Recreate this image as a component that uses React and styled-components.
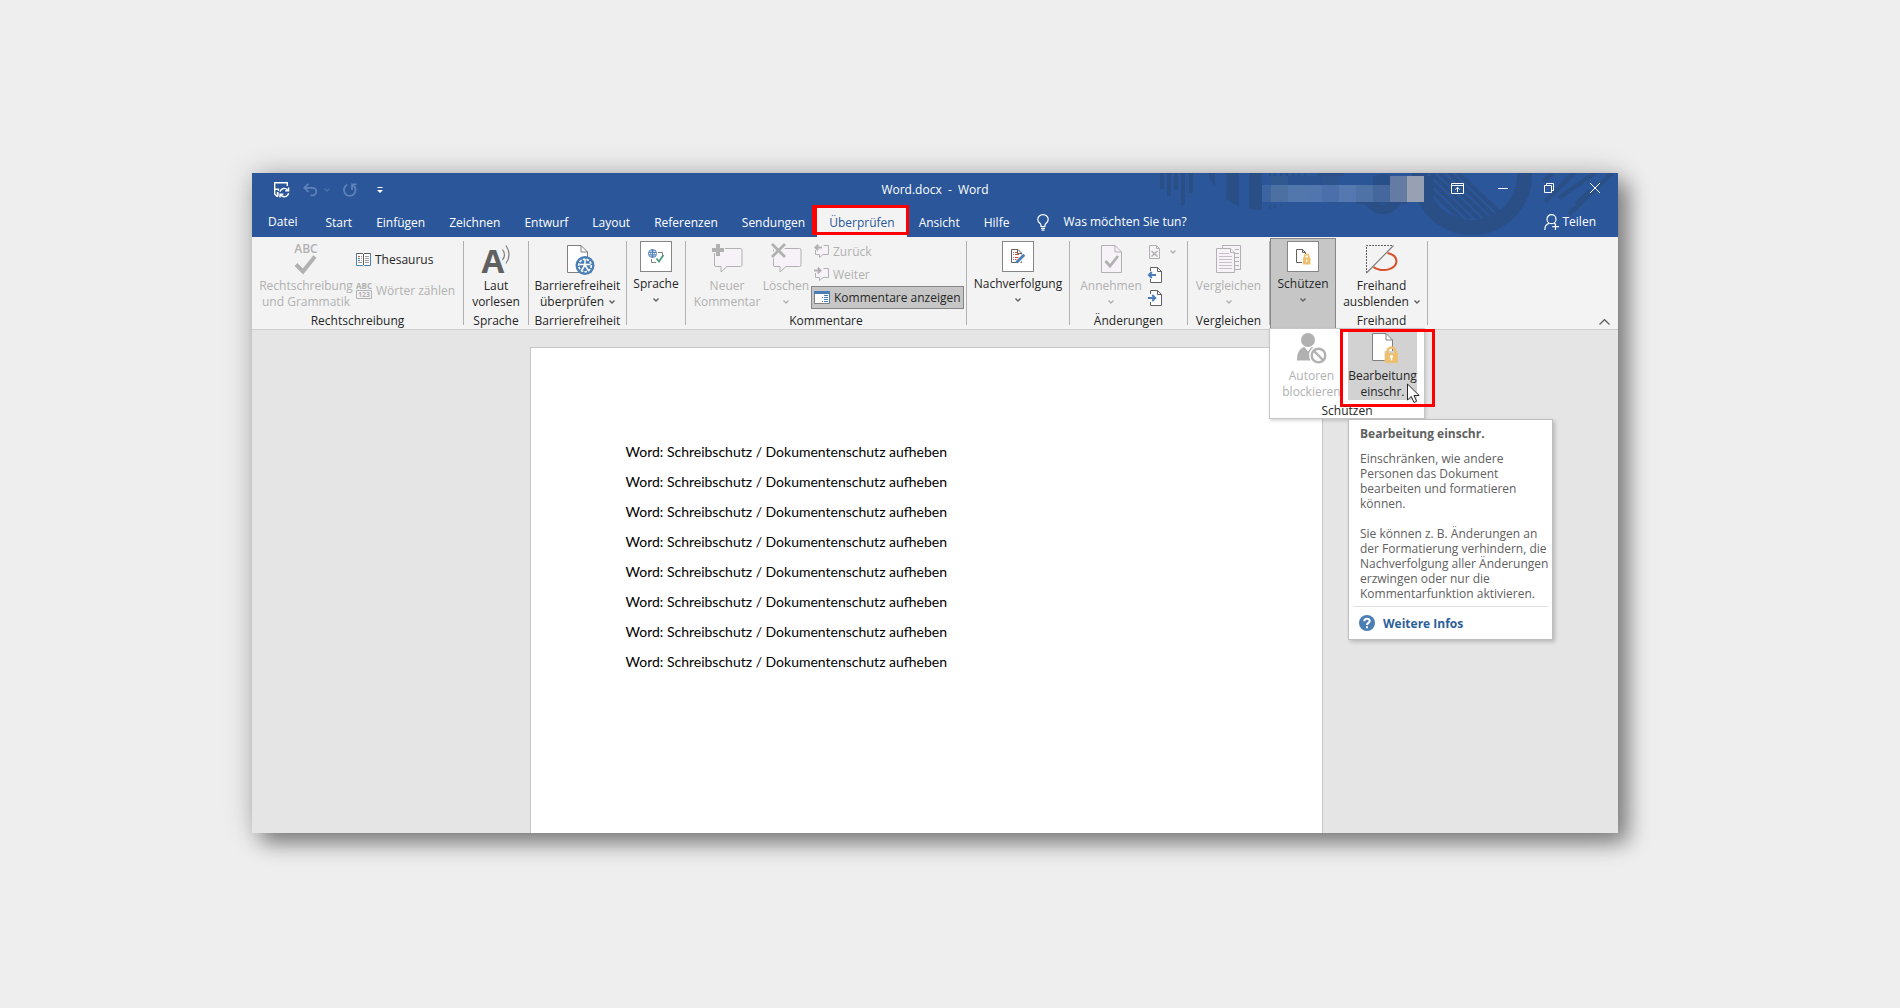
import styled, { createGlobalStyle, css } from "styled-components";

const GlobalStyle = createGlobalStyle`
  * {
    box-sizing: border-box;
  }

  body {
    margin: 0;
    background: #eeeeee;
    color: #262626;
    font-family: "Open Sans", "Noto Sans", sans-serif;
    font-size: 12px;
    line-height: 16px;
  }

  button,
  input {
    margin: 0;
    padding: 0;
    border: 0;
    background: none;
    color: inherit;
    font: inherit;
  }

  svg {
    display: block;
    flex: none;
    overflow: visible;
  }
`;

const Stage = styled.div`
  display: flex;
  min-height: 100vh;
  padding: 173px 282px 175px 252px;
`;

const Window = styled.div`
  display: flex;
  flex-direction: column;
  flex: 1;
  min-width: 0;
  background: #e5e5e5;
  box-shadow:
    10px 10px 20px rgba(0, 0, 0, 0.42),
    0 0 28px rgba(0, 0, 0, 0.2);
`;

/* ---------- blue header ---------- */

const Header = styled.header`
  position: relative;
  background: #2b579a;
  color: #fff;
`;

const HeaderArt = styled.svg`
  position: absolute;
  top: 0;
  right: 0;
  overflow: hidden;
`;

const TitleBar = styled.div`
  position: relative;
  display: grid;
  grid-template-columns: 1fr auto 1fr;
  height: 34px;
`;

const QuickAccess = styled.div`
  display: flex;
  align-items: center;
  padding-left: 22px;
`;

const QuickButton = styled.button`
  display: flex;
  align-items: center;
  gap: 6px;
  height: 16px;
  margin-right: ${(props) => (props.$wide ? "20px" : "13px")};
`;

const Title = styled.div`
  align-self: center;
  white-space: pre;
`;

const WindowButtons = styled.div`
  display: flex;
  justify-content: flex-end;
`;

const WindowButton = styled.button`
  display: flex;
  justify-content: center;
  align-items: center;
  width: 46px;
  height: 30px;
`;

const TabBar = styled.nav`
  position: relative;
  display: flex;
  height: 30px;
`;

const Tab = styled.button`
  position: relative;
  height: 30px;
  padding: 2px 12px 0;
  white-space: nowrap;

  ${(props) =>
    props.$file &&
    css`
      padding: 0 16px;
    `}

  ${(props) =>
    props.$active &&
    css`
      background: #f3f3f3;
      color: #2b579a;
    `}
`;

const TabFrame = styled.span`
  position: absolute;
  inset: -2px -2px 2px -5px;
  border: 3px solid #fe0000;
  border-left-width: 5px;
`;

const TellMe = styled.label`
  display: flex;
  align-items: center;
  gap: 14px;
  margin-left: 16px;
`;

const TellMeInput = styled.input`
  width: 160px;
  outline: none;

  &::placeholder {
    color: #fff;
    opacity: 1;
  }
`;

const ShareButton = styled.button`
  display: flex;
  align-items: center;
  gap: 2px;
  margin-left: auto;
  margin-right: 22px;
`;

/* ---------- ribbon ---------- */

const Ribbon = styled.div`
  display: flex;
  height: 93px;
  background: #f3f3f3;
  border-bottom: 1px solid #cdcdcd;
`;

const Group = styled.section`
  display: flex;
  flex-direction: column;
  flex: none;
  width: ${(props) => props.$width}px;
  margin: 4px 0;
  border-right: 1px solid #b1b1b1;
`;

const GroupBody = styled.div`
  display: flex;
  justify-content: ${(props) => (props.$start ? "flex-start" : "center")};
  flex: 1;
  padding-left: ${(props) => (props.$start ? "7px" : "0")};
`;

const GroupCaption = styled.div`
  height: 12px;
  line-height: 16px;
  text-align: center;
  white-space: nowrap;
`;

const BigButton = styled.button`
  display: flex;
  flex-direction: column;
  align-items: center;
  width: ${(props) => props.$width || 90}px;
  padding-top: 4px;
  white-space: nowrap;

  &:disabled {
    color: #b1b1b1;
  }
`;

const BigIcon = styled.span`
  display: flex;
  justify-content: center;
  height: 33px;
`;

const LabelLine = styled.span`
  display: flex;
  align-items: center;
  gap: 5px;
  height: 16px;
`;

const SmallColumn = styled.div`
  display: flex;
  flex-direction: column;
  align-items: flex-start;
  gap: ${(props) => (props.$spread ? "8px" : "0")};
  margin-top: ${(props) => (props.$spread ? "7px" : "-1px")};
`;

const SmallButton = styled.button`
  display: flex;
  align-items: center;
  gap: 4px;
  height: 23px;
  padding: 0 2px;
  border: 1px solid transparent;
  text-align: left;
  white-space: nowrap;

  &:disabled {
    color: #b1b1b1;
  }

  ${(props) =>
    props.$pressed &&
    css`
      background: #c6c6c6;
      border-color: #868686;
    `}
`;

const FoldedButton = styled.button`
  display: flex;
  flex-direction: column;
  align-items: center;
  width: 100%;
  white-space: nowrap;
`;

const IconBox = styled.span`
  display: flex;
  justify-content: center;
  align-items: center;
  width: 32px;
  height: 31px;
  margin-bottom: 4px;
  background: #fff;
  border: 1px solid #868686;
`;

const Anchor = styled.div`
  position: relative;
  width: 66px;
  margin-top: 1px;
  background: #c6c6c6;
  border: 1px solid #868686;
  border-bottom: 0;
  padding-top: 2px;
`;

const CollapseButton = styled.button`
  align-self: flex-end;
  margin-left: auto;
  padding: 4px 8px;
`;

/* ---------- drop-down and tooltip ---------- */

const Menu = styled.div`
  position: absolute;
  z-index: 2;
  top: 89px;
  left: -2px;
  width: 156px;
  height: 91px;
  background: #fff;
  border: 1px solid #c6c6c6;
  box-shadow: 1px 2px 3px rgba(0, 0, 0, 0.15);
`;

const MenuItems = styled.div`
  display: flex;
  justify-content: space-between;
  padding: 3px 7px 0;
`;

const MenuButton = styled(BigButton)`
  width: 69px;
  height: 68px;
  padding-top: 1px;
  background: ${(props) => (props.$hot ? "#d2d2d2" : "none")};
`;

const MenuIcon = styled(BigIcon)`
  height: 35px;
`;

const MenuCaption = styled.div`
  position: relative;
  z-index: 1;
  line-height: 22px;
  text-align: center;
`;

const MenuFrame = styled.div`
  position: absolute;
  top: 0;
  left: 70px;
  width: 95px;
  height: 78px;
  border: 3px solid #fe0000;
`;

const Cursor = styled.svg`
  position: absolute;
  z-index: 3;
  top: 54px;
  left: 137px;
`;

const Tooltip = styled.aside`
  position: absolute;
  top: 90px;
  left: 78px;
  width: 205px;
  padding: 6px 4px 8px;
  background: #fff;
  border: 1px solid #bebebe;
  box-shadow: 2px 2px 4px rgba(0, 0, 0, 0.2);
  color: #606060;
  line-height: 15px;
  white-space: nowrap;
`;

const TooltipTitle = styled.h2`
  margin: 0 0 10px;
  padding: 0 7px;
  font-size: 12px;
  line-height: 15px;
`;

const TooltipText = styled.p`
  margin: 0 0 15px;
  padding: 0 7px;
`;

const TooltipFooter = styled.footer`
  margin-top: -10px;
  padding: 8px 6px 0;
  border-top: 1px solid #e1e1e1;
`;

const MoreLink = styled.a`
  display: flex;
  align-items: center;
  gap: 8px;
  color: #2b6099;
  font-weight: 700;
  text-decoration: none;
`;

/* ---------- document ---------- */

const Workspace = styled.main`
  display: flex;
  justify-content: center;
  flex: 1;
  padding: 17px 18px 0 0;
`;

const Page = styled.article`
  width: 793px;
  padding: 89px 95px 0;
  background: #fff;
  border: 1px solid #c6c6c6;
  border-bottom: 0;
  color: #000;
  font-family: Lato, sans-serif;
  font-size: 14px;
`;

const Paragraph = styled.p`
  margin: 0;
  line-height: 30px;
`;

/* ---------- icons ---------- */

const Chevron = ({ color = "#606060" }) => (
  <svg width="6" height="4" viewBox="0 0 6 4" fill="none" stroke={color} strokeWidth="1.4">
    <path d="M0.5 0.5 3 3 5.5 0.5" />
  </svg>
);

const SaveIcon = () => (
  <svg width="16" height="16" viewBox="0 0 16 16" fill="none" stroke="#fff" strokeWidth="1.4">
    <path d="M4 14.3H3L0.7 12V0.7H13.3V4" />
    <path d="M0.7 7.2H4.5V9" />
    <path d="M3.7 10V14.5" strokeWidth="1.8" />
    <path d="M6 9.6A4.4 4.4 0 0 1 13.6 8M14.6 5.4V8.7H11.2" />
    <path d="M14.6 11.2A4.4 4.4 0 0 1 6.8 13M6 15.5V12.2H9.4" />
  </svg>
);

const UndoIcon = () => (
  <svg width="15" height="14" viewBox="0 0 15 14" fill="none" stroke="#5f82b8" strokeWidth="1.8">
    <path d="M5.5 0.8 1.3 4.8 5.5 8.8M1.5 4.8H9.5A3.8 3.8 0 0 1 9.5 12.4H7.5" />
  </svg>
);

const RedoIcon = () => (
  <svg width="14" height="14" viewBox="0 0 14 14" fill="none" stroke="#5f82b8" strokeWidth="1.8">
    <path d="M4.2 1.8A5.8 5.8 0 1 0 10 2.2M9 7V1.3H13.5" />
  </svg>
);

const CustomizeIcon = () => (
  <svg width="6" height="6" viewBox="0 0 6 6" fill="#fff">
    <path d="M0.5 0H5.5V1H0.5ZM0 3H6L3 6Z" />
  </svg>
);

const RibbonOptionsIcon = () => (
  <svg width="13" height="11" viewBox="0 0 13 11" fill="none" stroke="#fff">
    <path d="M0.5 0.5H12.5V10.5H0.5ZM0.5 2.5H12.5M6.5 9V4.5M4.2 6.6 6.5 4.3 8.8 6.6" />
  </svg>
);

const MinimizeIcon = () => (
  <svg width="10" height="1" viewBox="0 0 10 1">
    <path d="M0 0H10V1H0Z" fill="#fff" />
  </svg>
);

const RestoreIcon = () => (
  <svg width="10" height="10" viewBox="0 0 10 10" fill="none" stroke="#fff">
    <path d="M0.5 2.5H7.5V9.5H0.5ZM2.5 2.5V0.5H9.5V7.5H7.5" />
  </svg>
);

const CloseIcon = () => (
  <svg width="10" height="10" viewBox="0 0 10 10" fill="none" stroke="#fff">
    <path d="M0 0 10 10M10 0 0 10" />
  </svg>
);

const BulbIcon = () => (
  <svg width="12" height="17" viewBox="0 0 12 17" fill="none" stroke="#fff" strokeWidth="1.2">
    <path d="M4 12.5V11C4 9.5 0.8 8.6 0.8 5.4A5.2 4.8 0 0 1 11.2 5.4C11.2 8.6 8 9.5 8 11V12.5ZM4 14.3H8M4.5 16.2H7.5" />
  </svg>
);

const ShareIcon = () => (
  <svg width="16" height="17" viewBox="0 0 16 17" fill="none" stroke="#fff" strokeWidth="1.2">
    <circle cx="7.5" cy="5.2" r="4.5" />
    <path d="M0.8 16C0.8 12 2.6 10 5 9.4M9.8 9 11 10M11.5 9.5V16M8.3 12.7H15" />
  </svg>
);

const SpellingIcon = () => (
  <svg width="28" height="32" viewBox="0 0 28 32">
    <text x="14" y="8" textAnchor="middle" fontSize="12" fontWeight="600" fill="#b1b1b1">
      ABC
    </text>
    <path d="M4 19.5 11 26.5 23 11.5" fill="none" stroke="#b1b1b1" strokeWidth="4" />
  </svg>
);

const ThesaurusIcon = () => (
  <svg width="15" height="13" viewBox="0 0 15 13" fill="none">
    <path d="M0.5 0.5H6.5L7.5 1.5 8.5 0.5H14.5V12.5H8.5L7.5 11.5 6.5 12.5H0.5Z" fill="#fff" stroke="#4a7fb5" />
    <path d="M0.5 0.5H6.5L7.5 1.5 8.5 0.5H14.5M7.5 1V12" stroke="#606060" />
    <path d="M2 3.5H4" stroke="#d8512c" />
    <path d="M2 5.5H4M2 7.5H4" stroke="#4a7fb5" />
    <path d="M5 3.5H6M5 5.5H6M5 7.5H6M2 9.5H6M9 3.5H13M9 5.5H13M9 7.5H13M9 9.5H13" stroke="#9a9a9a" />
  </svg>
);

const WordCountIcon = () => (
  <svg width="16" height="16" viewBox="0 0 16 16" fill="#b1b1b1" fontWeight="700">
    <text x="8" y="6" textAnchor="middle" fontSize="8">
      ABC
    </text>
    <path d="M0.5 7.5H15.5V15.5H0.5Z" fill="none" stroke="#b1b1b1" />
    <text x="8" y="14" textAnchor="middle" fontSize="7">
      123
    </text>
  </svg>
);

const ReadAloudIcon = () => (
  <svg width="28" height="30" viewBox="0 0 28 30">
    <text x="11" y="28" textAnchor="middle" fontSize="33" fontWeight="700" fill="#606060">
      A
    </text>
    <path d="M20.5 4.5Q24.5 10 20.5 15M24 0.5Q30 9.5 24 18.5" fill="none" stroke="#808080" strokeWidth="1.2" />
  </svg>
);

const AccessibilityIcon = () => (
  <svg width="35" height="30" viewBox="-7 0 35 30" fill="none">
    <path d="M0.5 0.5H14L20.5 7V27.5H0.5Z" fill="#fff" stroke="#808080" />
    <path d="M14 0.5V7H20.5" stroke="#808080" />
    <circle cx="18" cy="20.5" r="9.5" fill="#4a7fb5" />
    <circle cx="18" cy="20.5" r="6.3" stroke="#fff" strokeWidth="1.6" strokeDasharray="2.6 1.2" />
    <path d="M18 14V20M12.5 19.5H23.5M18 20 14.5 25.5M18 20 21.5 25.5" stroke="#fff" strokeWidth="1.5" />
  </svg>
);

const LanguageIcon = () => (
  <svg width="17" height="15" viewBox="0 0 17 15" fill="none">
    <path d="M10 3.5H14.5V7M3.5 10V13.5H8" stroke="#808080" />
    <circle cx="4.5" cy="4.5" r="4" fill="#fff" stroke="#4a7fb5" />
    <path d="M4.5 0.5V8.5M0.5 3.5H8.5M0.8 5.8H8.2M4.5 0.5Q0.8 4.5 4.5 8.5Q8.2 4.5 4.5 0.5" stroke="#4a7fb5" strokeWidth="0.9" />
    <path d="M8.5 9.5 11 12.5 15.5 6" stroke="#4f9d7b" strokeWidth="1.9" />
  </svg>
);

const NewCommentIcon = () => (
  <svg width="31" height="29" viewBox="0 1 31 29" fill="none">
    <path d="M2.5 4.5H28.5Q30 4.5 30 6V21Q30 22.5 28.5 22.5H15L9 28V22.5H4Q2.5 22.5 2.5 21Z" fill="#f7f2f8" stroke="#b1b1b1" />
    <path d="M6 0V13M0 6H13" stroke="#f3f3f3" strokeWidth="6" />
    <path d="M6 0V12M0 6H12" stroke="#b1b1b1" strokeWidth="4" />
  </svg>
);

const DeleteCommentIcon = () => (
  <svg width="31" height="29" viewBox="0 1 31 29" fill="none">
    <path d="M2.5 4.5H28.5Q30 4.5 30 6V21Q30 22.5 28.5 22.5H15L9 28V22.5H4Q2.5 22.5 2.5 21Z" fill="#f7f2f8" stroke="#b1b1b1" />
    <path d="M1 0 14 13M14 0 1 13" stroke="#f3f3f3" strokeWidth="6" />
    <path d="M1 0 14 13M14 0 1 13" stroke="#b1b1b1" strokeWidth="2.8" />
  </svg>
);

const StepCommentIcon = ({ forward }) => (
  <svg width="15" height="15" viewBox="0 0 15 15" fill="none">
    <path d="M9.5 1.5H14.5V10.5H9L5.5 13.5V10.5H1.5V6" fill="#f7f2f8" stroke="#b1b1b1" />
    <path
      d={forward ? "M0 3.5H6M3.8 0.8 6.6 3.5 3.8 6.2" : "M8 3.5H1.5M4.2 0.8 1.4 3.5 4.2 6.2"}
      stroke="#b1b1b1"
      strokeWidth="1.9"
    />
  </svg>
);

const ShowCommentsIcon = () => (
  <svg width="16" height="13" viewBox="0 0 16 13" fill="none">
    <path d="M0.5 0.5H15.5V12.5H0.5Z" fill="#fff" stroke="#4a7fb5" />
    <path d="M0 0H16V3H0Z" fill="#4a7fb5" />
    <path d="M10 4.5H14M8 6.5H9M10 6.5H14M10 8.5H14M8 10.5H9M10 10.5H14" stroke="#4a7fb5" />
    <path d="M0.5 3V12.5H15.5" stroke="#808080" />
  </svg>
);

const TrackingIcon = () => (
  <svg width="15" height="15" viewBox="0 0 15 15" fill="none">
    <path d="M0.5 0.5H7L10.5 4V13.5H0.5Z" fill="#fff" stroke="#606060" />
    <path d="M6.5 0.5V4.5H10.5" stroke="#606060" />
    <path d="M4 3.5H6M4 5.5H8M4 8.5H8M4 10.5H6" stroke="#d8512c" />
    <path d="M2 3.5H3M2 5.5H3M2 8.5H3M2 10.5H3" stroke="#808080" />
    <path d="M6 13.5 13.5 6" stroke="#fff" strokeWidth="5" />
    <path d="M5.5 13.5 13.3 5.7" stroke="#4a7fb5" strokeWidth="2.8" />
  </svg>
);

const AcceptIcon = () => (
  <svg width="21" height="28" viewBox="0 0 21 28" fill="none" stroke="#b1b1b1">
    <path d="M0.5 0.5H14L20.5 7V27.5H0.5Z" fill="#f7f2f8" />
    <path d="M14 0.5V7H20.5" />
    <path d="M4.5 16 9 21 17 11" strokeWidth="2.8" />
  </svg>
);

const RejectIcon = () => (
  <svg width="18" height="14" viewBox="0 0 18 14" fill="none" stroke="#b1b1b1">
    <path d="M1.5 0.5H8.5L11.5 3.5V13.5H1.5Z" fill="#f7f2f8" />
    <path d="M8.5 0.5V3.5H11.5" />
    <path d="M3.5 6 9.5 11.5M9.5 6 3.5 11.5" strokeWidth="1.5" />
  </svg>
);

const StepChangeIcon = ({ forward }) => (
  <svg width="14" height="16" viewBox="0 0 14 16" fill="none">
    <path d="M2.5 4V0.5H9.5L13.5 4.5V15.5H2.5V12" fill="#fff" stroke="#606060" />
    <path d="M9.5 0.5V4.5H13.5" stroke="#606060" />
    <path
      d={forward ? "M0 8H6.5M4.2 5 7.2 8 4.2 11" : "M8 8H1.5M3.8 5 0.9 8 3.8 11"}
      stroke="#4a7fb5"
      strokeWidth="2"
    />
  </svg>
);

const CompareIcon = () => (
  <svg width="25" height="28" viewBox="0 0 25 28" fill="#f7f2f8" stroke="#b1b1b1">
    <path d="M6.5 0.5H24.5V24.5H6.5Z" />
    <path d="M19 4.5H23M19 8.5H23M19 12.5H23M19 16.5H23M19 20.5H23" />
    <path d="M0.5 3.5H14.5L18.5 7.5V27.5H0.5Z" />
    <path d="M14.5 3.5V7.5H18.5" />
    <path d="M3 8.5H13M3 11.5H16M3 14.5H16M3 17.5H16M3 20.5H16M3 23.5H16" stroke="#c4c0c6" />
  </svg>
);

const ProtectIcon = () => (
  <svg width="15" height="16" viewBox="0 0 15 16" fill="none">
    <path d="M6 13.5H0.5V0.5H6.5L9.5 3.5V5" stroke="#606060" />
    <path d="M6.5 0.5V3.5H9.5" stroke="#606060" />
    <path d="M8.6 9V7.5A2.1 2.1 0 0 1 12.8 7.5V9" stroke="#eec06d" strokeWidth="1.6" />
    <path d="M7 8.5H14.5V15.5H7Z" fill="#eec06d" />
    <path d="M10.7 10.5V13" stroke="#fff" strokeWidth="1.2" />
  </svg>
);

const HideInkIcon = () => (
  <svg width="32" height="29" viewBox="0 0 32 29" fill="none">
    <path d="M0.5 28V0.5H27" stroke="#606060" strokeDasharray="2 1" />
    <path d="M27.5 0.5 0.5 28" stroke="#808080" strokeWidth="1.2" />
    <path d="M21.5 8C28 9.5 31 13 30.3 17.5C29.5 23 20 26.5 13 24.5C10 23.8 8.5 23 7.5 22" stroke="#d8512c" strokeWidth="2" />
  </svg>
);

const BlockAuthorsIcon = () => (
  <svg width="30" height="31" viewBox="0 0 30 31" fill="none">
    <circle cx="11" cy="7" r="7" fill="#b1b1b1" />
    <path d="M0 27.5C0 19 3 15 7.5 14L11 18.5 14.5 14C18 14.5 20 16 21 18V27.5Z" fill="#b1b1b1" />
    <circle cx="21.5" cy="22.5" r="9.5" fill="#fff" />
    <circle cx="21.5" cy="22.5" r="6.8" stroke="#b1b1b1" strokeWidth="2.4" />
    <path d="M16.5 17.5 26.5 27.5" stroke="#b1b1b1" strokeWidth="2.4" />
  </svg>
);

const RestrictIcon = () => (
  <svg width="35" height="31" viewBox="-7 0 35 31" fill="none">
    <path d="M0.5 0.5H14L20.5 7V27.5H0.5Z" fill="#fff" stroke="#808080" />
    <path d="M14 0.5V7H20.5" stroke="#808080" />
    <path d="M12.5 18H27V31H12.5Z" fill="#d2d2d2" />
    <path d="M15.5 20V18.5A4 4 0 0 1 23.5 18.5V20" stroke="#eec06d" strokeWidth="2.6" />
    <path d="M13 20H26V28.5Q26 30 24.5 30H14.5Q13 30 13 28.5Z" fill="#eec06d" />
    <circle cx="19.5" cy="23.5" r="1.6" fill="#fff" />
    <path d="M19.5 24V27.5" stroke="#fff" strokeWidth="1.4" />
  </svg>
);

const HelpIcon = () => (
  <svg width="16" height="16" viewBox="0 0 16 16" fill="none">
    <circle cx="8" cy="8" r="8" fill="#4a7fb5" />
    <path d="M5.3 6.2C5.3 3 10.7 3 10.7 6C10.7 8 8 7.8 8 10" stroke="#fff" strokeWidth="2" />
    <path d="M7 11.3H9V13.3H7Z" fill="#fff" />
  </svg>
);

const CollapseIcon = () => (
  <svg width="11" height="6" viewBox="0 0 11 6" fill="none" stroke="#606060" strokeWidth="1.2">
    <path d="M0.5 5.5 5.5 0.7 10.5 5.5" />
  </svg>
);

/* the blurred account name, one tile after the other */
const nameTiles = [
  [112, 12, 9, 17, "#3c64a0"],
  [121, 3, 17, 9, "#30598f"],
  [138, 3, 34, 9, "#2a5290"],
  [172, 3, 17, 9, "#2d548c"],
  [189, 3, 34, 9, "#2a5596"],
  [223, 3, 17, 9, "#294f88"],
  [121, 12, 17, 17, "#4d70a2"],
  [138, 12, 17, 17, "#5277ac"],
  [155, 12, 17, 17, "#5176ae"],
  [172, 12, 17, 17, "#4a6fab"],
  [189, 12, 17, 17, "#5578b0"],
  [206, 12, 17, 17, "#4e72a5"],
  [223, 12, 17, 17, "#44679d"],
  [240, 3, 17, 26, "#647ba3"],
  [257, 3, 17, 26, "#97a1b3"],
];

const Decoration = () => (
  <HeaderArt width="468" height="64" viewBox="0 0 468 64" fill="none" stroke="#2a4f87">
    <clipPath id="disc">
      <circle cx="322" cy="2" r="50" />
    </clipPath>
    <g fill="#2a4f87" stroke="none">
      <path d="M10 0H14V16H10ZM17 0H21V23H17ZM24 0H28V17H24ZM31 0H35V32H31ZM39 0H43V20H39Z" />
      <path d="M58 0H65V14Q61 9 58 0ZM76 0H89V33Q82 31 76 26ZM99 0H112V37Q104 37 99 36Z" />
      <path d="M119 0H121V3H119ZM124 0H126V3H124ZM130 0H132V3H130ZM136 0H138V3H136ZM142 0H144V3H142ZM148 0H150V3H148ZM154 0H156V3H154ZM167 0H194V3H167Z" />
      <path d="M119 32H121V36H119ZM124 32H126V35H124ZM130 32H132V33H130Z" />
      <path d="M206 29H257V31H206ZM274 3H283V32H274Z" />
    </g>
    <circle cx="233" cy="21" r="15.5" strokeWidth="9" />
    <circle cx="322" cy="2" r="52.5" strokeWidth="15" />
    <path
      d="M308 0 356 46M299 0 347 46M290 0 338 46M281 0 329 46M272 0 320 46M263 0 311 46"
      strokeWidth="4"
      clipPath="url(#disc)"
    />
    <path d="M403 0 394 8M424 0 395 29M446 -1 409 25M462 0 419 41M440 18 426 31" strokeWidth="4.5" />
    {nameTiles.map(([x, y, width, height, fill]) => (
      <rect key={`${x}-${y}`} x={x} y={y} width={width} height={height} fill={fill} stroke="none" />
    ))}
  </HeaderArt>
);

/* ---------- page ---------- */

const tabs = [
  "Start",
  "Einfügen",
  "Zeichnen",
  "Entwurf",
  "Layout",
  "Referenzen",
  "Sendungen",
  "Überprüfen",
  "Ansicht",
  "Hilfe",
];

const paragraphs = Array(8).fill("Word: Schreibschutz / Dokumentenschutz aufheben");

function RibbonGroup({ caption, width, start, children }) {
  return (
    <Group $width={width}>
      <GroupBody $start={start}>{children}</GroupBody>
      <GroupCaption>{caption}</GroupCaption>
    </Group>
  );
}

function RibbonButton({ icon, lines, arrow, disabled, width }) {
  const color = disabled ? "#b1b1b1" : "#606060";
  return (
    <BigButton disabled={disabled} $width={width}>
      <BigIcon>{icon}</BigIcon>
      <LabelLine>{lines[0]}</LabelLine>
      <LabelLine>
        {lines[1]}
        {arrow && <Chevron color={color} />}
      </LabelLine>
    </BigButton>
  );
}

function FoldedGroup({ icon, label }) {
  return (
    <FoldedButton>
      <IconBox>{icon}</IconBox>
      <LabelLine>{label}</LabelLine>
      <LabelLine>
        <Chevron />
      </LabelLine>
    </FoldedButton>
  );
}

function ProtectMenu() {
  return (
    <Menu>
      <MenuItems>
        <MenuButton disabled>
          <MenuIcon>
            <BlockAuthorsIcon />
          </MenuIcon>
          <LabelLine>Autoren</LabelLine>
          <LabelLine>blockieren</LabelLine>
        </MenuButton>
        <MenuButton $hot>
          <MenuIcon>
            <RestrictIcon />
          </MenuIcon>
          <LabelLine>Bearbeitung</LabelLine>
          <LabelLine>einschr.</LabelLine>
        </MenuButton>
      </MenuItems>
      <MenuFrame />
      <MenuCaption>Schützen</MenuCaption>
      <Cursor width="14" height="21" viewBox="0 0 14 21">
        <path d="M0.5 1V17L4.3 13.4 7 19.5 9.6 18.3 7 12.5H12.2Z" fill="#fff" stroke="#262626" />
      </Cursor>
      <Tooltip>
        <TooltipTitle>Bearbeitung einschr.</TooltipTitle>
        <TooltipText>
          Einschränken, wie andere
          <br />
          Personen das Dokument
          <br />
          bearbeiten und formatieren
          <br />
          können.
        </TooltipText>
        <TooltipText>
          Sie können z. B. Änderungen an
          <br />
          der Formatierung verhindern, die
          <br />
          Nachverfolgung aller Änderungen
          <br />
          erzwingen oder nur die
          <br />
          Kommentarfunktion aktivieren.
        </TooltipText>
        <TooltipFooter>
          <MoreLink href="#infos">
            <HelpIcon />
            Weitere Infos
          </MoreLink>
        </TooltipFooter>
      </Tooltip>
    </Menu>
  );
}

export default function App() {
  return (
    <>
      <GlobalStyle />
      <Stage>
        <Window>
          <Header>
            <Decoration />
            <TitleBar>
              <QuickAccess>
                <QuickButton aria-label="Speichern">
                  <SaveIcon />
                </QuickButton>
                <QuickButton aria-label="Rückgängig">
                  <UndoIcon />
                  <Chevron color="#4a70ac" />
                </QuickButton>
                <QuickButton aria-label="Wiederholen" $wide>
                  <RedoIcon />
                </QuickButton>
                <QuickButton aria-label="Anpassen">
                  <CustomizeIcon />
                </QuickButton>
              </QuickAccess>
              <Title>Word.docx  -  Word</Title>
              <WindowButtons>
                <WindowButton aria-label="Menübandoptionen">
                  <RibbonOptionsIcon />
                </WindowButton>
                <WindowButton aria-label="Minimieren">
                  <MinimizeIcon />
                </WindowButton>
                <WindowButton aria-label="Verkleinern">
                  <RestoreIcon />
                </WindowButton>
                <WindowButton aria-label="Schließen">
                  <CloseIcon />
                </WindowButton>
              </WindowButtons>
            </TitleBar>
            <TabBar>
              <Tab $file>Datei</Tab>
              {tabs.map((name) => (
                <Tab key={name} $active={name === "Überprüfen"}>
                  {name}
                  {name === "Überprüfen" && <TabFrame />}
                </Tab>
              ))}
              <TellMe>
                <BulbIcon />
                <TellMeInput aria-label="Was möchten Sie tun?" placeholder="Was möchten Sie tun?" />
              </TellMe>
              <ShareButton>
                <ShareIcon />
                Teilen
              </ShareButton>
            </TabBar>
          </Header>

          <Ribbon>
            <RibbonGroup caption="Rechtschreibung" width={212} start>
              <RibbonButton disabled width={94} icon={<SpellingIcon />} lines={["Rechtschreibung", "und Grammatik"]} />
              <SmallColumn $spread>
                <SmallButton>
                  <ThesaurusIcon />
                  Thesaurus
                </SmallButton>
                <SmallButton disabled>
                  <WordCountIcon />
                  Wörter zählen
                </SmallButton>
              </SmallColumn>
            </RibbonGroup>

            <RibbonGroup caption="Sprache" width={65}>
              <RibbonButton width={60} icon={<ReadAloudIcon />} lines={["Laut", "vorlesen"]} />
            </RibbonGroup>

            <RibbonGroup caption="Barrierefreiheit" width={98}>
              <RibbonButton icon={<AccessibilityIcon />} lines={["Barrierefreiheit", "überprüfen"]} arrow />
            </RibbonGroup>

            <RibbonGroup width={59}>
              <FoldedGroup icon={<LanguageIcon />} label="Sprache" />
            </RibbonGroup>

            <RibbonGroup caption="Kommentare" width={281} start>
              <RibbonButton disabled width={68} icon={<NewCommentIcon />} lines={["Neuer", "Kommentar"]} />
              <RibbonButton disabled width={50} icon={<DeleteCommentIcon />} lines={["Löschen", ""]} arrow />
              <SmallColumn>
                <SmallButton disabled>
                  <StepCommentIcon />
                  Zurück
                </SmallButton>
                <SmallButton disabled>
                  <StepCommentIcon forward />
                  Weiter
                </SmallButton>
                <SmallButton $pressed>
                  <ShowCommentsIcon />
                  Kommentare anzeigen
                </SmallButton>
              </SmallColumn>
            </RibbonGroup>

            <RibbonGroup width={103}>
              <FoldedGroup icon={<TrackingIcon />} label="Nachverfolgung" />
            </RibbonGroup>

            <RibbonGroup caption="Änderungen" width={118} start>
              <RibbonButton disabled width={68} icon={<AcceptIcon />} lines={["Annehmen", ""]} arrow />
              <SmallColumn>
                <SmallButton disabled aria-label="Ablehnen">
                  <RejectIcon />
                  <Chevron color="#b1b1b1" />
                </SmallButton>
                <SmallButton aria-label="Vorherige Änderung">
                  <StepChangeIcon />
                </SmallButton>
                <SmallButton aria-label="Nächste Änderung">
                  <StepChangeIcon forward />
                </SmallButton>
              </SmallColumn>
            </RibbonGroup>

            <RibbonGroup caption="Vergleichen" width={82}>
              <RibbonButton disabled width={68} icon={<CompareIcon />} lines={["Vergleichen", ""]} arrow />
            </RibbonGroup>

            <Anchor>
              <FoldedGroup icon={<ProtectIcon />} label="Schützen" />
              <ProtectMenu />
            </Anchor>

            <RibbonGroup caption="Freihand" width={92}>
              <RibbonButton icon={<HideInkIcon />} lines={["Freihand", "ausblenden"]} arrow />
            </RibbonGroup>

            <CollapseButton aria-label="Menüband reduzieren">
              <CollapseIcon />
            </CollapseButton>
          </Ribbon>

          <Workspace>
            <Page>
              {paragraphs.map((text, i) => (
                <Paragraph key={i}>{text}</Paragraph>
              ))}
            </Page>
          </Workspace>
        </Window>
      </Stage>
    </>
  );
}
